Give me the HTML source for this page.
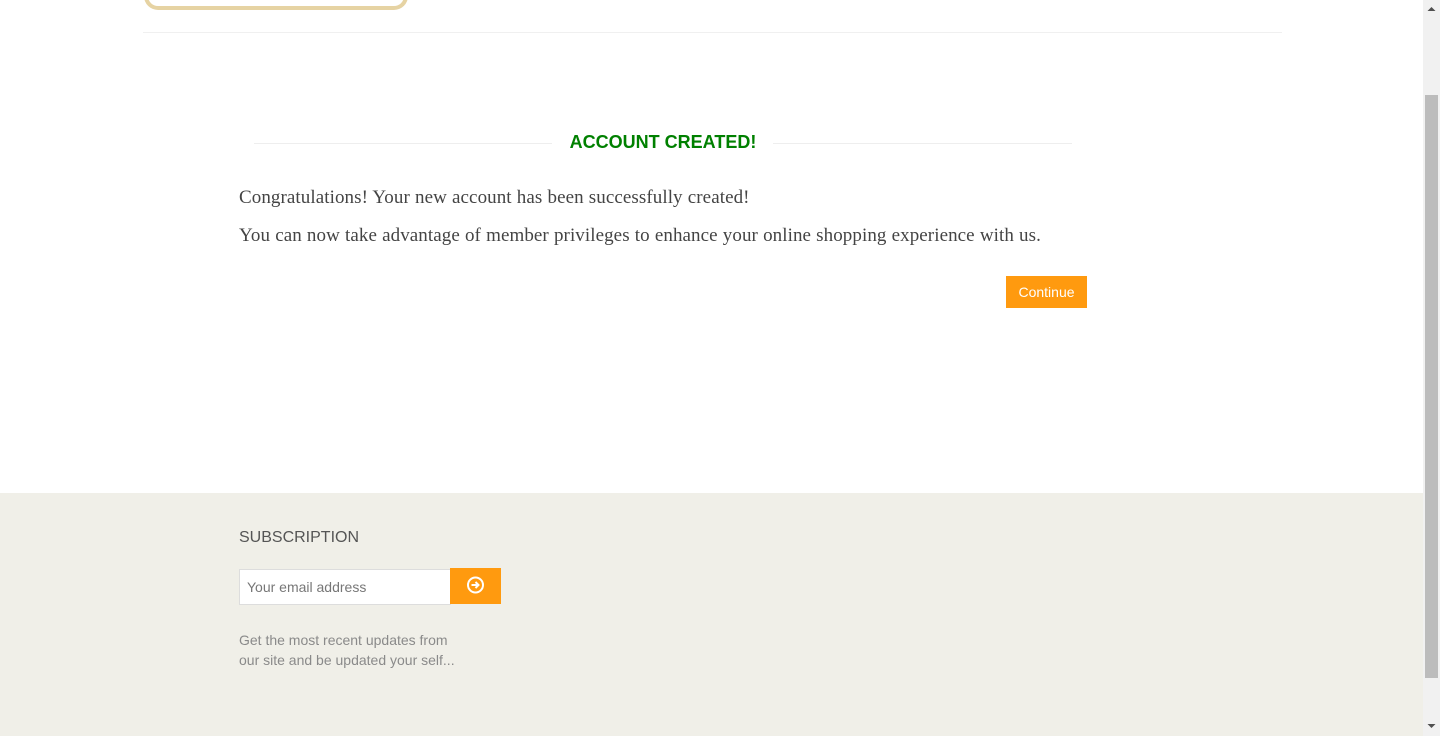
<!DOCTYPE html>
<html><head><style>
body{margin:0;width:1440px;height:736px;overflow:hidden;position:relative;background:#fff;font-family:"Liberation Sans",sans-serif}
.logo{position:absolute;left:144px;top:-30px;width:256px;height:36px;border:4px solid #e6d3a3;border-top:none;border-radius:0 0 14px 14px}
.hr{position:absolute;left:143px;top:32px;width:1139px;height:1px;background:#f0f0f0}
.line{position:absolute;top:143px;height:1px;background:#eee}
h1{position:absolute;left:0;width:1326px;text-align:center;top:132px;margin:0;font-size:18px;color:#008000;font-weight:bold}
p{position:absolute;left:239px;margin:0;font-family:"Liberation Serif",serif;font-size:19px;color:#444;letter-spacing:0.08px;word-spacing:0.3px}
.btn{position:absolute;left:1006px;top:276px;width:81px;height:32px;background:#ff9a0f;color:#fff;font-size:14px;line-height:32px;text-align:center}
.foot{position:absolute;left:0;top:493px;width:1423px;height:243px;background:#f0efe8}
.sub{position:absolute;left:239px;top:529px;font-size:16px;color:#555}
.inp{position:absolute;left:239px;top:569px;background:#fff;border:1px solid #ddd;box-sizing:border-box;width:212px;height:36px;font-size:14px;color:#777;padding:9px 7px}
.go{position:absolute;left:450px;top:568px;width:51px;height:36px;background:#ff9a0f}
.txt{position:absolute;left:239px;top:630px;font-size:14px;color:#8a8a8a;line-height:20px}
.sb{position:absolute;left:1423px;top:0;width:17px;height:736px;background:#f1f1f1}
.th{position:absolute;left:1425px;top:95px;width:13px;height:583px;background:#bcbcbc}
</style></head><body>
<div class="logo"></div><div class="hr"></div>
<div class="line" style="left:254px;width:298px"></div>
<div class="line" style="left:773px;width:299px"></div>
<h1>ACCOUNT CREATED!</h1>
<p style="top:187px">Congratulations! Your new account has been successfully created!</p>
<p style="top:225px">You can now take advantage of member privileges to enhance your online shopping experience with us.</p>
<div class="btn">Continue</div>
<div class="foot"></div>
<div class="sub">SUBSCRIPTION</div>
<div class="inp">Your email address</div>
<div class="go"><svg width="51" height="36"><circle cx="25.5" cy="17" r="7.5" fill="none" stroke="#fff" stroke-width="2"/><path d="M21.5 17h7M25.5 14l3 3-3 3" fill="none" stroke="#fff" stroke-width="2"/></svg></div>
<div class="txt">Get the most recent updates from<br>our site and be updated your self...</div>
<div class="sb"></div><div class="th"></div>
<svg style="position:absolute;left:1426px;top:5px" width="11" height="8"><path d="M1.5 6h8L5.5 2z" fill="#505050"/></svg>
<svg style="position:absolute;left:1426px;top:722px" width="11" height="8"><path d="M1.5 2h8L5.5 6z" fill="#505050"/></svg>
</body></html>
